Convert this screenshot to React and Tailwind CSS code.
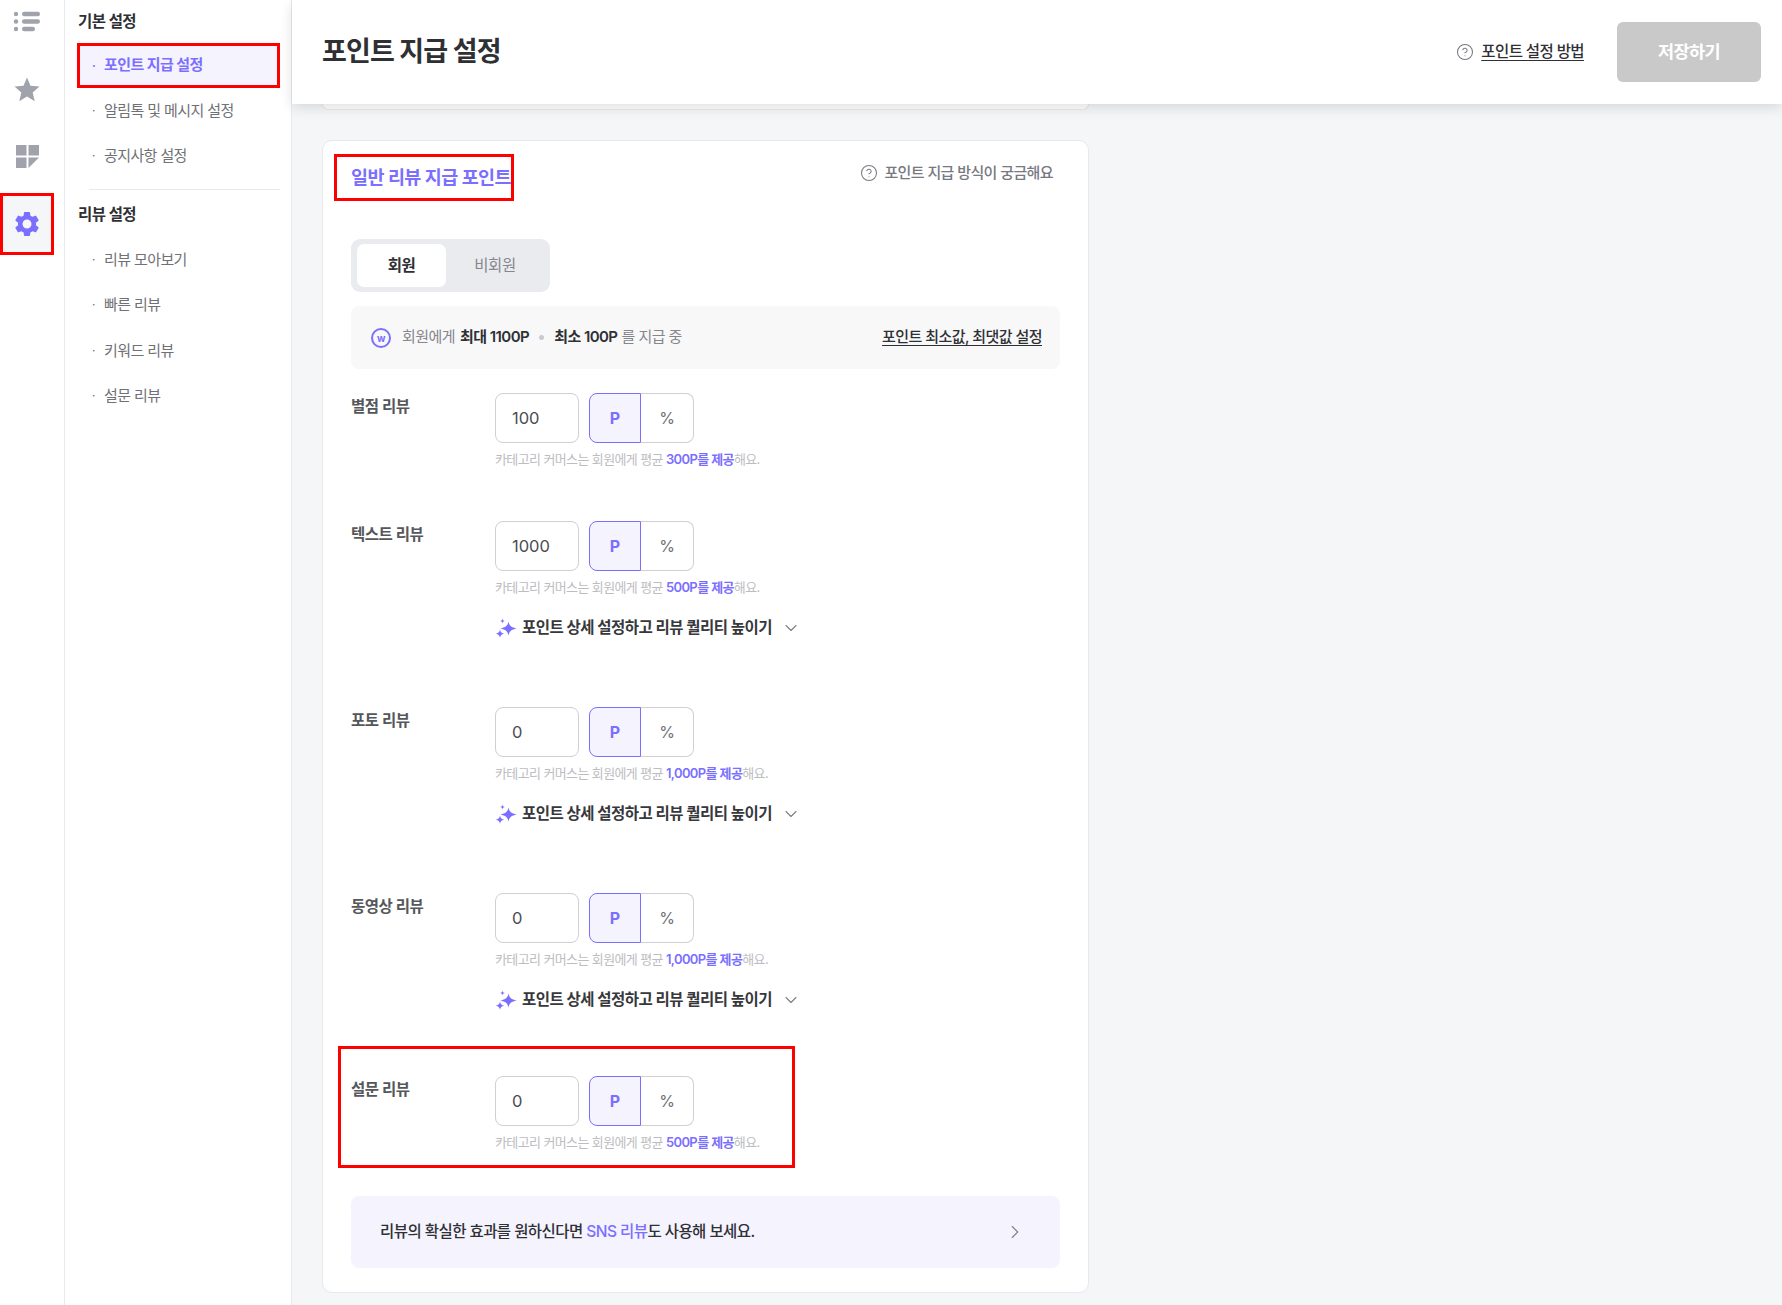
import React from "react";
import { CircleHelp, ChevronDown, ChevronRight } from "lucide-react";
import { MdSettings, MdStar } from "react-icons/md";

const font = { };

function ListIcon() {
  return (
    <svg width="28" height="22" viewBox="0 0 28 22" fill="#a0a3ab">
      <circle cx="3" cy="3" r="2.2" />
      <rect x="9" y="0.8" width="18" height="4.4" rx="2.2" />
      <circle cx="3" cy="10.5" r="2.2" />
      <rect x="9" y="8.3" width="18" height="4.4" rx="2.2" />
      <circle cx="3" cy="18" r="2.2" />
      <rect x="9" y="15.8" width="13" height="4.4" rx="2.2" />
    </svg>
  );
}

function GridIcon() {
  return (
    <svg width="23" height="23" viewBox="0 0 23 23" fill="#a0a3ab">
      <rect x="0" y="0" width="10.5" height="10.5" />
      <rect x="12.5" y="0" width="10.5" height="10.5" />
      <rect x="0" y="12.5" width="10.5" height="10.5" />
      <path d="M12.5 12.5H23L12.5 23Z" />
    </svg>
  );
}

function Sparkle() {
  return (
    <svg width="22" height="20" viewBox="0 0 22 20" fill="#7b6fff">
      <path d="M13.5 3.5C14.2 7.6 16.6 9.6 21.5 10.5C16.6 11.4 14.2 13.4 13.5 17.5C12.8 13.4 10.4 11.4 5.5 10.5C10.4 9.6 12.8 7.6 13.5 3.5Z" />
      <path d="M5 11.5C5.4 14 6.5 15.2 9.2 15.7C6.5 16.2 5.4 17.4 5 19.8C4.6 17.4 3.5 16.2 0.5 15.7C3.5 15.2 4.6 14 5 11.5Z" />
      <path d="M7.5 0.5C7.7 2 8.3 2.6 10 3C8.3 3.4 7.7 4 7.5 5.5C7.3 4 6.7 3.4 5 3C6.7 2.6 7.3 2 7.5 0.5Z" />
    </svg>
  );
}

function WIcon() {
  return (
    <span className="flex h-[20px] w-[20px] items-center justify-center rounded-full border-2 border-[#7b6fff] text-[10px] font-bold leading-none text-[#7b6fff]">
      w
    </span>
  );
}

function NavItem({ children, active }) {
  return (
    <div
      className={
        active
          ? "flex h-[45px] items-center border-[3px] border-[#ff0000] bg-[#f4f3fe] pl-[12px] text-[15px] font-semibold tracking-[-0.6px] text-[#7b6fff]"
          : "flex h-[45.5px] items-center pl-[15px] text-[15px] tracking-[-0.6px] text-[#6f7177]"
      }
    >
      <span className="w-[12px] text-[12px]">·</span>
      {children}
    </div>
  );
}

function ReviewRow({ label, value, amount, detail, className }) {
  return (
    <div className={"flex " + className}>
      <div className="w-[144px] pt-[2px] text-[15.5px] font-semibold leading-[24px] tracking-[-0.5px] text-[#55575c]">{label}</div>
      <div className="flex flex-col">
        <div className="flex">
          <input
            readOnly
            value={value}
            className="h-[50px] w-[84px] rounded-[8px] border border-[#cfd0d4] bg-white pl-[16px] text-[16.5px] text-[#4a4c51] outline-none"
          />
          <div className="ml-[10px] flex h-[50px] w-[52px] items-center justify-center rounded-l-[8px] border border-[#7b6fff] bg-[#f4f3fe] text-[16px] font-bold text-[#7b6fff]">P</div>
          <div className="flex h-[50px] w-[53px] items-center justify-center rounded-r-[8px] border border-l-0 border-[#cfd0d4] text-[16px] text-[#6f7177]">%</div>
        </div>
        <div className="mt-[6px] h-[20px] text-[13px] leading-[20px] tracking-[-0.62px] text-[#bcbdc1]">
          카테고리 커머스는 회원에게 평균 <span className="font-semibold text-[#7b6fff]">{amount}를 제공</span>해요.
        </div>
        {detail && (
          <div className="mt-[19px] flex h-[24px] items-center">
            <Sparkle />
            <span className="ml-[5px] text-[15.5px] font-semibold tracking-[-0.55px] text-[#37383c]">포인트 상세 설정하고 리뷰 퀄리티 높이기</span>
            <ChevronDown size={20} strokeWidth={1.3} className="ml-[9px] text-[#7d7f85]" />
          </div>
        )}
      </div>
    </div>
  );
}

export default function App() {
  return (
    <div className="flex h-[1305px] w-full overflow-hidden bg-[#f5f6f8] font-['Inter','Noto_Sans_CJK_KR',sans-serif]">
      <aside className="flex w-[65px] shrink-0 flex-col border-r border-[#e8e9ec] bg-white">
        <div className="flex h-[44px] w-[54px] items-center justify-center"><ListIcon /></div>
        <div className="mt-[13px] flex h-[66px] w-[54px] items-center justify-center"><MdStar size={30} color="#a0a3ab" /></div>
        <div className="flex h-[66px] w-[54px] items-center justify-center"><GridIcon /></div>
        <div className="mt-[4px] flex h-[62px] w-[54px] items-center justify-center border-[3px] border-[#ff0000] bg-[#f5f6f8]"><MdSettings size={30} color="#7b6fff" /></div>
      </aside>

      <nav className="w-[227px] shrink-0 border-r border-[#e8e9ec] bg-white pl-[12px] pr-[11px]">
        <div className="flex h-[43px] items-center pl-[1px] pt-[1px] text-[15.5px] font-semibold tracking-[-0.6px] text-[#2f3034]">기본 설정</div>
        <NavItem active>포인트 지급 설정</NavItem>
        <NavItem>알림톡 및 메시지 설정</NavItem>
        <NavItem>공지사항 설정</NavItem>
        <div className="ml-[12px] mt-[10px] border-t border-[#e8e9ec]" />
        <div className="mt-[10px] flex h-[30px] items-center pl-[1px] text-[15.5px] font-semibold tracking-[-0.6px] text-[#2f3034]">리뷰 설정</div>
        <div className="mt-[7px]">
          <NavItem>리뷰 모아보기</NavItem>
          <NavItem>빠른 리뷰</NavItem>
          <NavItem>키워드 리뷰</NavItem>
          <NavItem>설문 리뷰</NavItem>
        </div>
      </nav>

      <main className="flex min-w-0 flex-1 flex-col">
        <header className="relative z-10 flex h-[104px] shrink-0 items-center bg-white pl-[30px] pr-[21px] shadow-[0_4px_12px_rgba(0,0,0,0.12)]">
          <h1 className="text-[27px] font-bold tracking-[-0.9px] text-[#2f3034]">포인트 지급 설정</h1>
          <div className="ml-auto flex items-center">
            <CircleHelp size={18} strokeWidth={1.4} className="text-[#77797f]" />
            <span className="ml-[7px] text-[15.5px] font-medium tracking-[-0.6px] text-[#2f3034] underline underline-offset-[3px]">포인트 설정 방법</span>
          </div>
          <button className="ml-[33px] h-[60px] w-[144px] rounded-[6px] bg-[#c9c9c9] text-[17.5px] font-bold tracking-[-0.6px] text-white">저장하기</button>
        </header>

        <div className="ml-[30px] h-[6px] w-[767px] rounded-b-[8px] border border-t-0 border-[#e8e9ec] bg-white" />

        <section className="ml-[30px] mt-[30px] h-[1153px] w-[767px] rounded-[10px] border border-[#e8e9ec] bg-white px-[28px]">
          <div className="flex h-[60px] items-start pt-[13px]">
            <div className="-ml-[17px] flex h-[47px] w-[180px] items-center border-[3px] border-[#ff0000] pl-[14px] text-[18.5px] font-semibold tracking-[-0.6px] text-[#7b6fff]">일반 리뷰 지급 포인트</div>
            <div className="ml-auto mr-[7px] mt-[8px] flex items-center">
              <CircleHelp size={18} strokeWidth={1.4} className="text-[#77797f]" />
              <span className="ml-[6px] text-[15px] font-medium tracking-[-0.6px] text-[#77797f]">포인트 지급 방식이 궁금해요</span>
            </div>
          </div>

          <div className="mt-[38px] flex h-[53px] w-[199px] items-center rounded-[9px] bg-[#e9ebee] pl-[6px]">
            <div className="flex h-[43px] w-[89px] items-center justify-center rounded-[7px] bg-white text-[15.5px] font-semibold tracking-[-0.5px] text-[#2f3034]">회원</div>
            <div className="flex h-[43px] w-[98px] items-center justify-center text-[15.5px] tracking-[-0.5px] text-[#85878d]">비회원</div>
          </div>

          <div className="mt-[14px] flex h-[63px] items-center rounded-[8px] bg-[#f8f8f9] pl-[20px] pr-[18px] text-[15px] tracking-[-0.55px] text-[#85878d]">
            <WIcon />
            <span className="ml-[11px]">회원에게</span>
            <span className="ml-[5px] font-semibold text-[#2f3034]">최대 1100P</span>
            <span className="ml-[10px] h-[5px] w-[5px] rounded-full bg-[#c8cad0]" />
            <span className="ml-[10px] font-semibold text-[#2f3034]">최소 100P</span>
            <span className="ml-[4px]">를 지급 중</span>
            <span className="ml-auto font-medium text-[#2f3034] underline underline-offset-[3px]">포인트 최소값, 최댓값 설정</span>
          </div>

          <ReviewRow className="mt-[24px]" label="별점 리뷰" value="100" amount="300P" />
          <ReviewRow className="mt-[52px]" label="텍스트 리뷰" value="1000" amount="500P" detail />
          <ReviewRow className="mt-[67px]" label="포토 리뷰" value="0" amount="1,000P" detail />
          <ReviewRow className="mt-[67px]" label="동영상 리뷰" value="0" amount="1,000P" detail />

          <div className="-ml-[13px] mt-[34px] h-[122px] w-[457px] border-[3px] border-[#ff0000] pl-[10px] pt-[27px]">
            <ReviewRow className="" label="설문 리뷰" value="0" amount="500P" />
          </div>

          <div className="mt-[28px] flex h-[72px] items-center rounded-[8px] bg-[#f4f3fe] pl-[29px] pr-[34px] text-[15.5px] font-medium tracking-[-0.55px] text-[#2f3034]">
            <span>리뷰의 확실한 효과를 원하신다면 <span className="text-[#7b6fff]">SNS 리뷰</span>도 사용해 보세요.</span>
            <ChevronRight size={22} strokeWidth={1.2} className="ml-auto text-[#7d7f85]" />
          </div>
        </section>
      </main>
    </div>
  );
}
